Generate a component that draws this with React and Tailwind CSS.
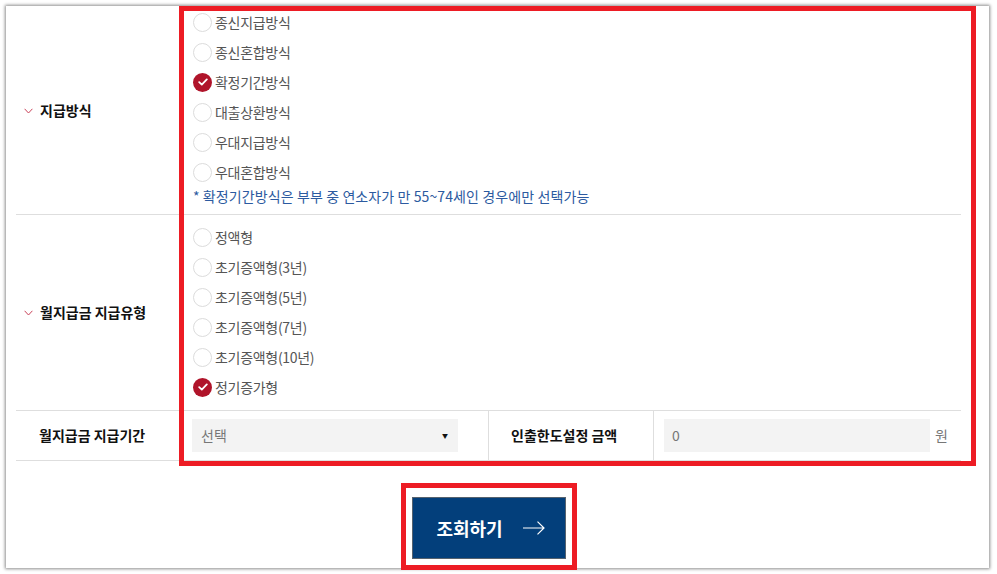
import React from 'react';

const font = { fontFamily: '"Noto Sans CJK KR", "Noto Sans", sans-serif' };

const payTypes = [
  { label: '종신지급방식' },
  { label: '종신혼합방식' },
  { label: '확정기간방식', checked: true },
  { label: '대출상환방식' },
  { label: '우대지급방식' },
  { label: '우대혼합방식' },
];

const monthlyTypes = [
  { label: '정액형' },
  { label: '초기증액형(3년)' },
  { label: '초기증액형(5년)' },
  { label: '초기증액형(7년)' },
  { label: '초기증액형(10년)' },
  { label: '정기증가형', checked: true },
];

function Radio({ label, checked }) {
  return (
    <label className="flex items-center h-[30px] gap-[3px]">
      {checked ? (
        <span className="w-[19px] h-[19px] rounded-full bg-[#b0142a] flex items-center justify-center">
          <svg width="10" height="8" viewBox="0 0 10 8" fill="none">
            <path d="M1.2 4.2 L3.8 6.6 L8.8 1.4" stroke="#fff" strokeWidth="1.8" strokeLinecap="round" strokeLinejoin="round" />
          </svg>
        </span>
      ) : (
        <span className="w-[19px] h-[19px] rounded-full border border-[#dcdcdc] bg-white" />
      )}
      <span className="text-[14px] tracking-[-0.3px] text-[#555]">{label}</span>
    </label>
  );
}

function Chevron() {
  return (
    <svg width="9" height="6" viewBox="0 0 9 6" fill="none" className="mr-[7px] mt-[1px]">
      <path d="M0.6 0.8 L4.5 5 L8.4 0.8" stroke="#c9435a" strokeWidth="1" />
    </svg>
  );
}

function RowLabel({ children }) {
  return (
    <div className="w-[164px] shrink-0 flex items-center pl-[8px] text-[14px] font-bold text-[#111]">
      <Chevron />
      {children}
    </div>
  );
}

export default function App() {
  return (
    <div className="w-[997px] h-[574px] bg-white relative overflow-hidden" style={font}>
      <div className="absolute left-[6px] top-[6px] w-[983px] h-[562px] bg-white shadow-[0_0_3px_1px_rgba(0,0,0,0.45)]">
        <div className="ml-[10px] w-[945px]">
          {/* 지급방식 */}
          <div className="flex border-b border-[#dedede]">
            <RowLabel>지급방식</RowLabel>
            <div className="pl-[13px] pt-[1px] pb-[9px]">
              {payTypes.map((o) => (
                <Radio key={o.label} {...o} />
              ))}
              <p className="text-[14px] tracking-[0.1px] leading-[18px] text-[#2c5aa0]">
                * 확정기간방식은 부부 중 연소자가 만 55~74세인 경우에만 선택가능
              </p>
            </div>
          </div>

          {/* 월지급금 지급유형 */}
          <div className="flex border-b border-[#dedede]">
            <RowLabel>월지급금 지급유형</RowLabel>
            <div className="pl-[13px] pt-[7px] pb-[8px]">
              {monthlyTypes.map((o) => (
                <Radio key={o.label} {...o} />
              ))}
            </div>
          </div>

          {/* 지급기간 / 인출한도 */}
          <div className="flex h-[50px] border-b border-[#dedede] text-[14px]">
            <div className="w-[164px] shrink-0 flex items-center pl-[23px] font-bold text-[#111]">월지급금 지급기간</div>
            <div className="w-[309px] shrink-0 flex items-center pl-[12px] pr-[30px] border-r border-[#dedede]">
              <div className="flex-1 h-[33px] bg-[#f3f3f3] flex items-center justify-between pl-[9px] pr-[10px] text-[#777]">
                <span>선택</span>
                <span className="text-[6px] text-[#111]">▼</span>
              </div>
            </div>
            <div className="w-[165px] shrink-0 flex items-center pl-[22px] font-bold text-[#111] border-r border-[#dedede]">인출한도설정 금액</div>
            <div className="flex-1 flex items-center pl-[10px]">
              <div className="w-[266px] h-[33px] bg-[#f3f3f3] flex items-center pl-[8px] text-[#777]">0</div>
              <span className="ml-[5px] text-[#777]">원</span>
            </div>
          </div>

          <div className="flex justify-center pt-[36px]">
            <button className="w-[154px] h-[62px] bg-[#033f7b] border border-[#56626e] flex items-center justify-center gap-[20px] pl-[4px] text-white text-[18px] font-bold">
              조회하기
              <svg width="22" height="14" viewBox="0 0 22 14" fill="none">
                <path d="M0 7 H21 M14.5 0.6 L21 7 L14.5 13.4" stroke="#fff" strokeWidth="1.2" />
              </svg>
            </button>
          </div>
        </div>
      </div>

      {/* annotation boxes */}
      <div className="absolute left-[179px] top-[6px] w-[797px] h-[460px] border-[5px] border-[#ed1c24] pointer-events-none" />
      <div className="absolute left-[401px] top-[483px] w-[176px] h-[87px] border-[5px] border-[#ed1c24] pointer-events-none" />
    </div>
  );
}
